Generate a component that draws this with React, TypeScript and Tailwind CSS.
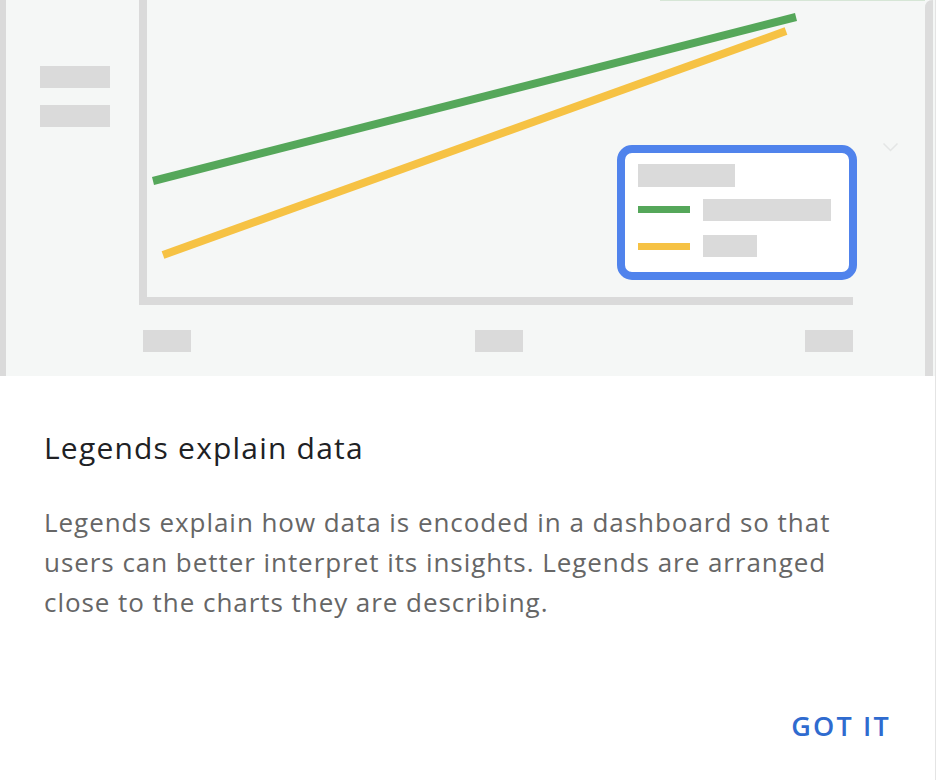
export default function App() {
  return (
    <div className="w-[936px] h-[780px] bg-white relative overflow-hidden border-r border-[#e4e4e4] font-['Open_Sans',sans-serif]">
      {/* Illustration */}
      <div className="h-[376px] bg-[#f5f7f6]">
        <svg width="936" height="376" viewBox="0 0 936 376" fill="none">
          <rect x="0" y="0" width="6" height="376" fill="#dadada" />
          <path d="M925 8 Q925 0 933 0 L933 376 L925 376 Z" fill="#dcdcdc" />
          <rect x="660" y="0" width="265" height="1" fill="#d6e6d6" />

          <rect x="40" y="66" width="70" height="22" fill="#dadada" />
          <rect x="40" y="105" width="70" height="22" fill="#dadada" />

          <rect x="139" y="0" width="8" height="305" fill="#dadada" />
          <rect x="139" y="297" width="714" height="8" fill="#dadada" />

          <rect x="143" y="330" width="48" height="22" fill="#dadada" />
          <rect x="475" y="330" width="48" height="22" fill="#dadada" />
          <rect x="805" y="330" width="48" height="22" fill="#dadada" />

          <line x1="153" y1="181" x2="796" y2="17" stroke="#55a75a" strokeWidth="8" />
          <line x1="163" y1="255" x2="786" y2="31" stroke="#f6c244" strokeWidth="8" />

          <rect x="621" y="149" width="232" height="127" rx="11" fill="#ffffff" stroke="#5083ec" strokeWidth="8" />
          <rect x="638" y="164" width="97" height="23" fill="#dadada" />
          <rect x="638" y="206" width="52" height="7" fill="#55a75a" />
          <rect x="703" y="199" width="128" height="22" fill="#dadada" />
          <rect x="638" y="243" width="52" height="7" fill="#f6c244" />
          <rect x="703" y="235" width="54" height="22" fill="#dadada" />

          <polyline points="883.5,143.5 890.5,150.5 897.5,143.5" stroke="#e4e6e5" strokeWidth="1.5" />
        </svg>
      </div>

      {/* Text */}
      <div className="px-[44px] pt-[54px]">
        <h2 className="text-[30px] leading-[36px] tracking-[1.2px] text-[#202124] font-normal">Legends explain data</h2>
        <p className="mt-[36px] w-[805px] text-[26px] leading-[40px] tracking-[0.95px] text-[#666666]">
          Legends explain how data is encoded in a dashboard so that users can better interpret its insights. Legends are arranged close to the charts they are describing.
        </p>
      </div>

      <div className="absolute right-[44px] bottom-[38px]">
        <button className="text-[27px] leading-[30px] font-semibold tracking-[2.2px] text-[#2f6bcf]">GOT IT</button>
      </div>
    </div>
  );
}
